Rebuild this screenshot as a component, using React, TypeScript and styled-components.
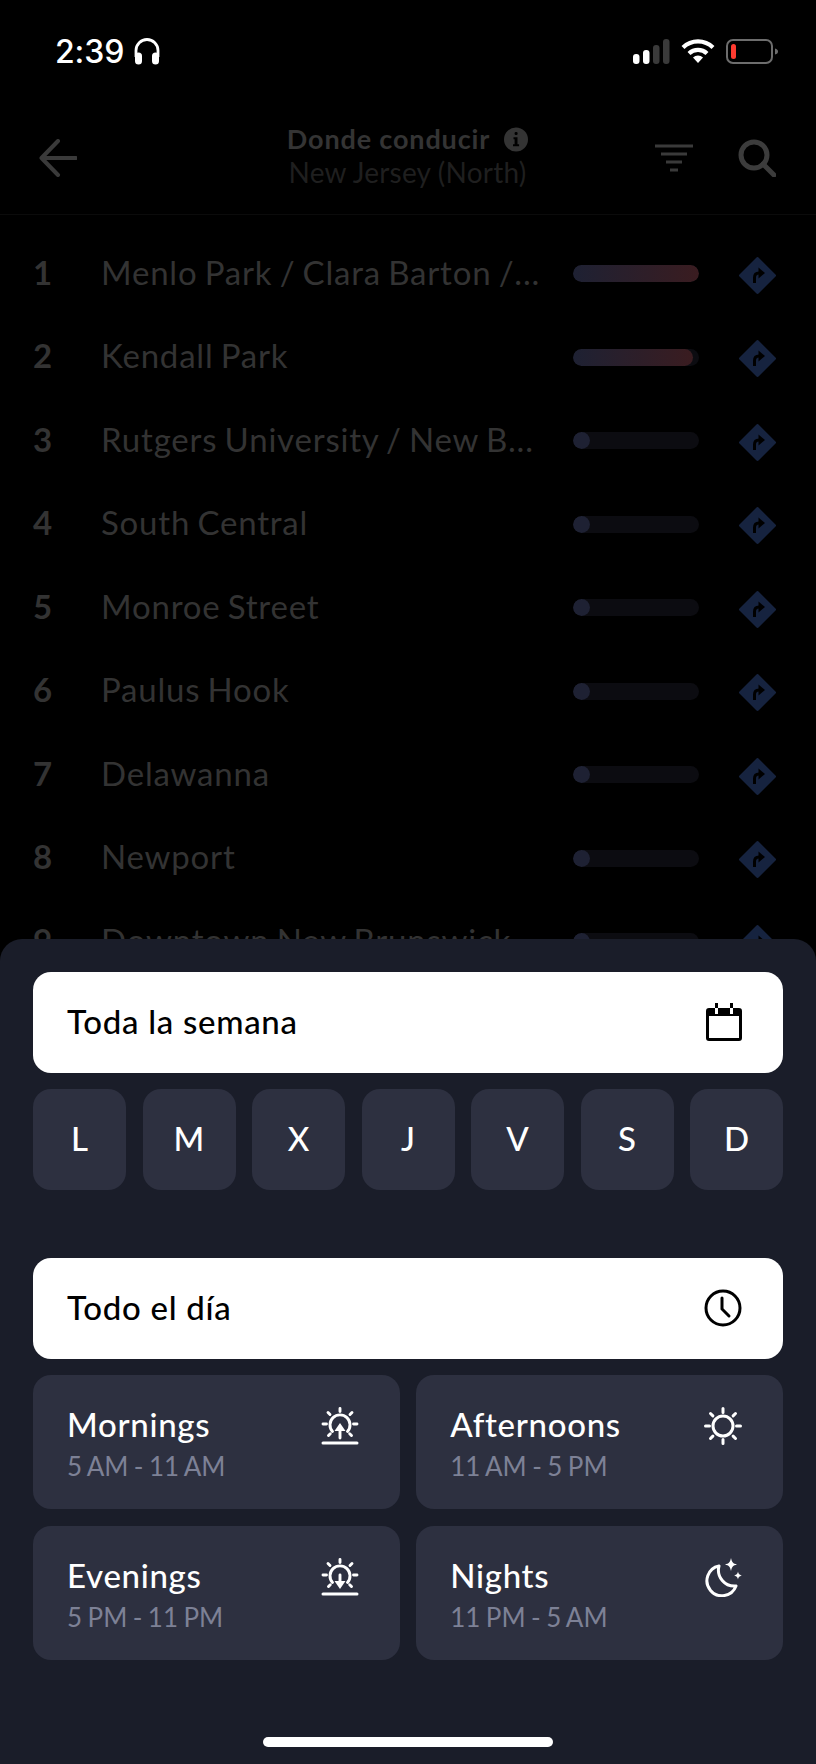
import React from 'react'
import styled, { createGlobalStyle } from 'styled-components'

const GlobalStyle = createGlobalStyle`
	html, body {
		margin: 0;
		padding: 0;
		background: #000;
		font-family: 'Lato', 'Noto Sans', sans-serif;
	}
`

const Screen = styled.div`
	position: relative;
	width: 816px;
	height: 1764px;
	overflow: hidden;
	background: #000;
`

const StatusBar = styled.div`
	display: flex;
	align-items: center;
	justify-content: space-between;
	height: 38px;
	padding: 32px 38px 0 55px;
`

const Clock = styled.div`
	display: flex;
	align-items: center;
	gap: 9px;
	color: #fff;
	font-family: 'Inter', sans-serif;
	font-size: 32px;
	font-weight: 500;
	letter-spacing: -0.1px;
`

const StatusIcons = styled.div`
	display: flex;
	align-items: center;
	gap: 11px;
`

const Header = styled.header`
	display: grid;
	grid-template-columns: 1fr auto 1fr;
	align-items: center;
	height: 145px;
	padding: 31px 40px 0 39px;
	box-sizing: border-box;
	border-bottom: 1px solid #0b0b0b;
`

const HeaderActions = styled.div`
	display: flex;
	align-items: center;
	justify-content: flex-end;
	gap: 45px;
`

const HeaderTitle = styled.div`
	display: flex;
	flex-direction: column;
	align-items: center;
	margin-top: -4px;
`

const TitleLine = styled.div`
	display: flex;
	align-items: center;
	gap: 14px;
	color: #343434;
	font-size: 27px;
	font-weight: 700;
	letter-spacing: 0.85px;
	line-height: 32px;
`

const Subtitle = styled.div`
	color: #1f1f1f;
	font-size: 28px;
	letter-spacing: 0.2px;
	line-height: 32px;
	margin-top: 1px;
`

const List = styled.div`
	padding-top: 17px;
`

const Row = styled.div`
	display: grid;
	grid-template-columns: 68px 472px 126px 77px;
	align-items: center;
	height: 83.5px;
	padding-left: 33px;
`

const RowNumber = styled.div`
	padding-bottom: 4px;
	color: #333;
	font-size: 33px;
	font-weight: 700;
`

const RowName = styled.div`
	padding-bottom: 4px;
	color: #333;
	font-size: 33px;
	letter-spacing: 0.8px;
	word-spacing: -2px;
	white-space: nowrap;
`

const BarTrack = styled.div`
	height: 17px;
	border-radius: 9px;
	background: #0c0c11;
	overflow: hidden;
`

const BarFill = styled.div<{ $width: number }>`
	height: 100%;
	width: ${(p) => p.$width}px;
	border-radius: 9px;
	background: ${(p) =>
		p.$width > 20
			? 'linear-gradient(90deg, #1e2133 0%, #3a1c20 100%)'
			: '#1e2133'};
`

const DirectionSlot = styled.div`
	display: flex;
	padding: 3px 0 0 40px;
`

const Sheet = styled.section`
	position: absolute;
	left: 0;
	right: 0;
	top: 939px;
	bottom: 0;
	padding: 33px 33px 0;
	background: #1a1d29;
	border-radius: 22px 22px 0 0;
	box-sizing: border-box;
`

const WideOption = styled.div`
	display: flex;
	align-items: center;
	justify-content: space-between;
	height: 100.5px;
	padding: 0 41px 0 34px;
	border-radius: 18px;
	background: #fff;
	color: #000;
	font-size: 33px;
	font-weight: 500;
	letter-spacing: 0.7px;
	box-sizing: border-box;
`

const OptionLabel = styled.span`
	padding-bottom: 3px;
`

const Days = styled.div`
	display: grid;
	grid-template-columns: repeat(7, 1fr);
	gap: 16.5px;
	margin: 16.5px 0 68px;
`

const Day = styled.div`
	display: flex;
	align-items: center;
	justify-content: center;
	height: 101px;
	padding-bottom: 3px;
	border-radius: 18px;
	background: #2d3040;
	color: #fff;
	font-size: 33px;
	font-weight: 500;
	box-sizing: border-box;
`

const Periods = styled.div`
	display: grid;
	grid-template-columns: 1fr 1fr;
	gap: 16.5px;
	margin-top: 16.5px;
`

const Period = styled.div`
	display: flex;
	justify-content: space-between;
	align-items: flex-start;
	height: 134px;
	padding: 30px 41px 0 34px;
	border-radius: 18px;
	background: #2d3040;
	box-sizing: border-box;
`

const PeriodName = styled.div`
	color: #fff;
	font-size: 33px;
	font-weight: 500;
	letter-spacing: 0.7px;
	line-height: 38px;
`

const PeriodHours = styled.div`
	color: #7d8196;
	font-size: 26px;
	word-spacing: -1.2px;
	line-height: 32px;
	margin-top: 7px;
`

const PeriodIcon = styled.div`
	display: flex;
	margin-top: 2px;
`

const HomeIndicator = styled.div`
	position: absolute;
	left: 263px;
	bottom: 17px;
	width: 290px;
	height: 10px;
	border-radius: 5px;
	background: #fff;
`

const Headphones = () => (
	<svg width="28" height="28" viewBox="0 0 28 28" fill="none">
		<path d="M3 20V13.500a11 11 0 0 1 22 0V20" stroke="#fff" strokeWidth="2.800" />
		<rect x="2" y="15.500" width="7" height="12" rx="3.500" fill="#fff" />
		<rect x="19" y="15.500" width="7" height="12" rx="3.500" fill="#fff" />
	</svg>
)

const Signal = () => (
	<svg width="37" height="25" viewBox="0 0 37 25">
		<rect x="0" y="15" width="6.5" height="10" rx="3" fill="#fff" />
		<rect x="10" y="11" width="6.5" height="14" rx="3" fill="#fff" />
		<rect x="20" y="6" width="6.5" height="19" rx="3" fill="#3a3a3a" />
		<rect x="30" y="0" width="6.5" height="25" rx="3" fill="#3a3a3a" />
	</svg>
)

const Wifi = () => (
	<svg width="34" height="26" viewBox="0 0 34 26" fill="none">
		<path d="M2 9.5a21.5 21.5 0 0 1 30 0" stroke="#fff" strokeWidth="4.2" />
		<path d="M8 15.5a13 13 0 0 1 18 0" stroke="#fff" strokeWidth="4.2" />
		<path d="M12 19.5 17 25l5-5.5a7.5 7.5 0 0 0-10 0z" fill="#fff" />
	</svg>
)

const Battery = () => (
	<svg width="52" height="25" viewBox="0 0 52 25" fill="none">
		<rect x="1" y="1" width="45" height="23" rx="6" stroke="#6d6d6d" strokeWidth="2" />
		<rect x="5" y="5" width="5" height="15" rx="2.5" fill="#ff3b30" />
		<path d="M49 9.5c2 .5 3 1.5 3 3s-1 2.5-3 3z" fill="#6d6d6d" />
	</svg>
)

const BackArrow = () => (
	<svg width="38" height="38" viewBox="0 0 38 38" fill="none">
		<path d="M19 2 2.5 19 19 36M2.5 19H37" stroke="#3a3a3a" strokeWidth="4" strokeLinecap="round" strokeLinejoin="round" />
	</svg>
)

const InfoIcon = () => (
	<svg width="24" height="25" viewBox="0 0 24 25">
		<circle cx="12" cy="12.5" r="12" fill="#343434" />
		<rect x="10.6" y="5" width="3" height="3" rx="1.2" fill="#000" />
		<path d="M9.5 10.2h4v7h1.6v2H9v-2h1.6v-5H9.500z" fill="#000" />
	</svg>
)

const FilterIcon = () => (
	<svg width="38" height="28" viewBox="0 0 38 28" fill="none" stroke="#3a3a3a" strokeWidth="3" strokeLinecap="butt">
		<path d="M0 2h38M6 10h26M11 18h16M15 26h8" />
	</svg>
)

const SearchIcon = () => (
	<svg width="38" height="38" viewBox="0 0 38 38" fill="none" stroke="#3c3c3c" strokeWidth="5">
		<circle cx="16" cy="16" r="13" />
		<path d="m25 25 11 11" strokeLinecap="round" />
	</svg>
)

const DirectionIcon = () => (
	<svg width="37" height="37" viewBox="0 0 37 37">
		<path d="M17.500.5.500 17.500a1.400 1.400 0 0 0 0 2l17 17a1.400 1.400 0 0 0 2 0l17-17a1.400 1.400 0 0 0 0-2l-17-17a1.400 1.400 0 0 0-2 0z" fill="#16233f" />
		<path d="M15.500 26v-5.500c0-2.800 1.500-4.500 4.500-4.500" fill="none" stroke="#000" strokeWidth="3" />
		<path d="M19.500 10.500 26 16l-6.500 5.500z" fill="#000" />
	</svg>
)

const CalendarIcon = () => (
	<svg width="36" height="38" viewBox="0 0 36 38">
		<path d="M3 5h6V0h3v5h12V0h3v5h6a3 3 0 0 1 3 3v27a3 3 0 0 1-3 3H3a3 3 0 0 1-3-3V8a3 3 0 0 1 3-3z" fill="#000" />
		<rect x="3" y="13" width="30" height="22" fill="#fff" />
		<rect x="9" y="5" width="3" height="6" fill="#fff" />
		<rect x="24" y="5" width="3" height="6" fill="#fff" />
	</svg>
)

const ClockIcon = () => (
	<svg width="38" height="38" viewBox="0 0 38 38" fill="none" stroke="#000" strokeWidth="3" strokeLinecap="round">
		<circle cx="19" cy="19" r="17" />
		<path d="M18 9v11l7 7" />
	</svg>
)

const SunIcon = () => (
	<svg width="38" height="38" viewBox="0 0 38 38" fill="none" stroke="#fff" strokeWidth="3" strokeLinecap="round">
		<path d="M19 1.500v4M19 32.500v4M1.500 19h4M32.500 19h4M6.500 6.500l2.400 2.400M29.100 29.100l2.400 2.400M6.500 31.500l2.400-2.400M29.100 8.900l2.400-2.400" />
		<circle cx="19" cy="19" r="10" />
	</svg>
)

const HorizonIcon = ({ down }: { down?: boolean }) => (
	<svg width="38" height="38" viewBox="0 0 38 38" fill="none" stroke="#fff" strokeWidth="2.900" strokeLinecap="round">
		<path d="M19 1.500v3M2 17h3.500M32.500 17H36M7 5.500l2 2M29 7.500l2-2M7.500 28.500l1.800-1.800M28.700 26.700l1.800 1.800" />
		<path d="M11.500 24.500a10 10 0 1 1 15 0" />
		<path d="M2 36h34" strokeWidth="3" />
		{down ? (
			<>
				<path d="M19 17v8" />
				<path d="M13.500 23h11L19 31z" fill="#fff" stroke="none" />
			</>
		) : (
			<>
				<path d="M13.500 24 19 16l5.500 8z" fill="#fff" stroke="none" />
				<path d="M19 23v8" />
			</>
		)}
	</svg>
)

const MoonIcon = () => (
	<svg width="38" height="39" viewBox="0 0 38 39">
		<path d="M15 8a15 15 0 1 0 17 20A16 16 0 0 1 15 8z" fill="none" stroke="#fff" strokeWidth="3" strokeLinejoin="round" />
		<path d="M27 0c1 4.500 2 5.500 6 6.500-4 1-5 2-6 6.500-1-4.500-2-5.500-6-6.500 4-1 5-2 6-6.500z" fill="#fff" />
		<path d="M34 13.500c.5 2.500 1 3 4 4-3 1-3.500 1.500-4 4-.5-2.500-1-3-4-4 3-1 3.500-1.500 4-4z" fill="#fff" />
	</svg>
)

const places = [
	{ name: 'Menlo Park / Clara Barton /...', fill: 126 },
	{ name: 'Kendall Park', fill: 120 },
	{ name: 'Rutgers University / New B...', fill: 17 },
	{ name: 'South Central', fill: 17 },
	{ name: 'Monroe Street', fill: 17 },
	{ name: 'Paulus Hook', fill: 17 },
	{ name: 'Delawanna', fill: 17 },
	{ name: 'Newport', fill: 17 },
	{ name: 'Downtown New Brunswick', fill: 17 },
]

const days = ['L', 'M', 'X', 'J', 'V', 'S', 'D']

const periods = [
	{ name: 'Mornings', hours: '5 AM - 11 AM', icon: <HorizonIcon /> },
	{ name: 'Afternoons', hours: '11 AM - 5 PM', icon: <SunIcon /> },
	{ name: 'Evenings', hours: '5 PM - 11 PM', icon: <HorizonIcon down /> },
	{ name: 'Nights', hours: '11 PM - 5 AM', icon: <MoonIcon /> },
]

export default function App() {
	return (
		<Screen>
			<GlobalStyle />
			<StatusBar>
				<Clock>
					2:39 <Headphones />
				</Clock>
				<StatusIcons>
					<Signal />
					<Wifi />
					<Battery />
				</StatusIcons>
			</StatusBar>
			<Header>
				<BackArrow />
				<HeaderTitle>
					<TitleLine>
						Donde conducir <InfoIcon />
					</TitleLine>
					<Subtitle>New Jersey (North)</Subtitle>
				</HeaderTitle>
				<HeaderActions>
					<FilterIcon />
					<SearchIcon />
				</HeaderActions>
			</Header>
			<List>
				{places.map((place, i) => (
					<Row key={place.name}>
						<RowNumber>{i + 1}</RowNumber>
						<RowName>{place.name}</RowName>
						<BarTrack>
							<BarFill $width={place.fill} />
						</BarTrack>
						<DirectionSlot>
							<DirectionIcon />
						</DirectionSlot>
					</Row>
				))}
			</List>
			<Sheet>
				<WideOption>
					<OptionLabel>Toda la semana</OptionLabel>
					<CalendarIcon />
				</WideOption>
				<Days>
					{days.map((day) => (
						<Day key={day}>{day}</Day>
					))}
				</Days>
				<WideOption>
					<OptionLabel>Todo el día</OptionLabel>
					<ClockIcon />
				</WideOption>
				<Periods>
					{periods.map((period) => (
						<Period key={period.name}>
							<div>
								<PeriodName>{period.name}</PeriodName>
								<PeriodHours>{period.hours}</PeriodHours>
							</div>
							<PeriodIcon>{period.icon}</PeriodIcon>
						</Period>
					))}
				</Periods>
				<HomeIndicator />
			</Sheet>
		</Screen>
	)
}
